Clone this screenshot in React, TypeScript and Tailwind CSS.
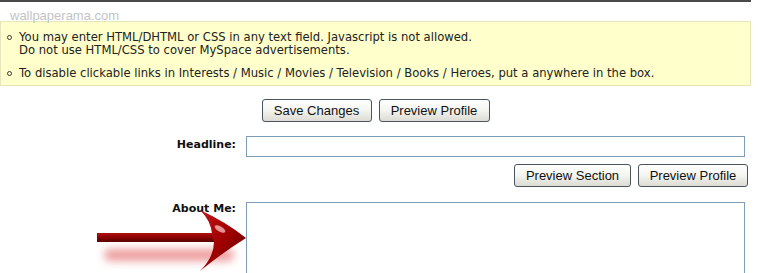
import React from "react";

const Btn = ({ children, w }: { children: React.ReactNode; w: string }) => (
  <button
    className={`${w} h-[23px] rounded-[3px] border border-[#4a5560] bg-gradient-to-b from-[#ffffff] via-[#f4f4f0] to-[#dcdcd4] text-[13px] leading-[21px] text-[#111] text-center`}
    style={{ fontFamily: '"Liberation Sans", Arial, sans-serif' }}
  >
    {children}
  </button>
);

const Bullet = () => (
  <span className="mt-[4px] mr-[7px] inline-block w-[5px] h-[5px] shrink-0 rounded-full border border-[#333]" />
);

export default function App() {
  const verdana = { fontFamily: '"DejaVu Sans", Verdana, sans-serif' };
  return (
    <div className="relative w-[763px] h-[273px] overflow-hidden bg-white">
      <div className="w-[751px] h-[2px] bg-[#4a4a4a]" />
      <div
        className="pl-[10px] pt-[6px] h-[19px] text-[13px] leading-[15px] text-[#c4c4c4]"
        style={{ fontFamily: '"Liberation Sans", Arial, sans-serif' }}
      >
        wallpaperama.com
      </div>
      <div
        className="w-[751px] h-[65px] border border-[#e6e6bc] bg-[#ffffcc] pl-[6px] pt-[9px] text-[11.6px] leading-[13px] text-[#222]"
        style={verdana}
      >
        <div className="flex">
          <Bullet />
          <div>
            You may enter HTML/DHTML or CSS in any text field. Javascript is not allowed.
            <br />
            Do not use HTML/CSS to cover MySpace advertisements.
          </div>
        </div>
        <div className="flex mt-[10px]">
          <Bullet />
          <div>
            To disable clickable links in Interests / Music / Movies / Television / Books / Heroes, put a anywhere in the box.
          </div>
        </div>
      </div>
      <div className="w-[751px] mt-[13px] flex justify-center gap-[7px]">
        <Btn w="w-[110px]">Save Changes</Btn>
        <Btn w="w-[111px]">Preview Profile</Btn>
      </div>
      <div className="w-[751px] mt-[14px] flex">
        <div className="w-[236px] pt-[2px] text-right text-[11px] font-bold leading-[13px] text-[#111]" style={verdana}>
          Headline:
        </div>
        <div className="ml-[10px] w-[499px] h-[21px] border border-[#7f9db9] bg-white" />
      </div>
      <div className="w-[751px] mt-[7px] pr-[3px] flex justify-end gap-[7px]">
        <Btn w="w-[117px]">Preview Section</Btn>
        <Btn w="w-[110px]">Preview Profile</Btn>
      </div>
      <div className="w-[751px] mt-[15px] flex">
        <div className="w-[236px] pt-[0px] text-right text-[11px] font-bold leading-[13px] text-[#111]" style={verdana}>
          About Me:
        </div>
        <div className="ml-[10px] w-[499px] h-[90px] border border-[#7f9db9] bg-white" />
      </div>
      <svg
        className="absolute left-[90px] top-[205px] pointer-events-none"
        width="165"
        height="68"
        viewBox="90 205 165 68"
      >
        <defs>
          <filter id="blur" x="-20%" y="-100%" width="140%" height="300%">
            <feGaussianBlur stdDeviation="4" />
          </filter>
          <linearGradient id="shaft" x1="0" y1="0" x2="0" y2="1">
            <stop offset="0" stopColor="#b01010" />
            <stop offset="0.5" stopColor="#8a0000" />
            <stop offset="1" stopColor="#5a0000" />
          </linearGradient>
          <linearGradient id="head" x1="0" y1="0" x2="1" y2="1">
            <stop offset="0" stopColor="#c01818" />
            <stop offset="0.5" stopColor="#a00000" />
            <stop offset="1" stopColor="#600000" />
          </linearGradient>
        </defs>
        <rect x="104" y="249" width="130" height="12" rx="6" fill="#e05a5a" opacity="0.6" filter="url(#blur)" />
        <path d="M97 233 L214 233 L214 242 L97 242 Z" fill="url(#shaft)" />
        <path
          d="M212 234 Q211 221 200 210 Q226 222 246 238 Q222 253 200 271 Q214 257 214 242 Z"
          fill="url(#head)"
        />
        <ellipse cx="220" cy="229" rx="6" ry="2.5" fill="#ffd0d0" opacity="0.7" transform="rotate(30 220 229)" />
      </svg>
    </div>
  );
}
